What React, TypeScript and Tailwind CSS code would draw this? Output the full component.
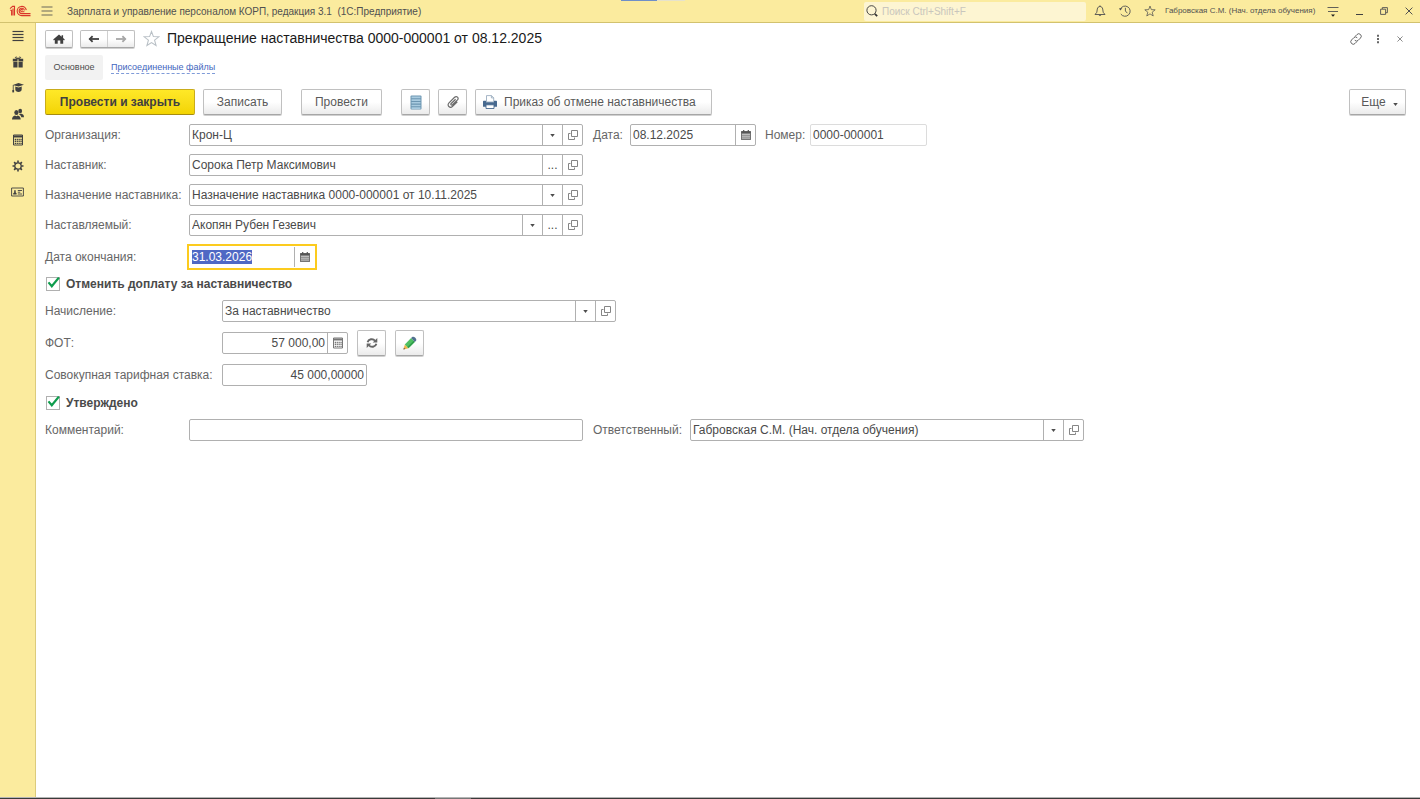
import clsx from "clsx";
import { useEffect, useRef, type ComponentProps, type ReactNode } from "react";

/* ---------- icons ---------- */

function LogoIcon() {
  return (
    <svg aria-hidden viewBox="0 0 22 12" className="h-3 w-[22px]" fill="none" stroke="#d9352a" strokeWidth="1.1">
      <path d="M1 3.6 3.6 1.4h1.9v9.200M1.200 5.200h1.400v5.400M4 3.600v7" />
      <path d="M21.500 10.600h-8.700a4.600 4.600 0 1 1 4.500-5.400" />
      <path d="M21.500 8.600h-8.600a2.700 2.700 0 1 1 2.600-3.300" />
      <path d="M13.800 5.300a1.100 1.100 0 1 0-1 1.400h2.600" />
    </svg>
  );
}

function LinesIcon({ rows, className }: { rows: number[]; className: string }) {
  return (
    <svg aria-hidden viewBox="0 0 12 12" className={className} stroke="currentColor" strokeWidth="1.2">
      {rows.map((y) => (
        <path key={y} d={`M.5 ${y}h11`} />
      ))}
    </svg>
  );
}

function GiftIcon() {
  return (
    <svg aria-hidden viewBox="0 0 12 12" className="h-3 w-3" fill="currentColor">
      <path d="M.8 2.800h4.700v2.600H.8zM6.500 2.800h4.700v2.600H6.500zM1.300 6h4.200v5.400H1.300zM6.500 6h4.200v5.400H6.500z" />
      <path d="M6 2.800C5 .8 3.600.7 3.400 1.500S4.500 2.800 6 2.800s2.800-.5 2.600-1.300S7 .8 6 2.800Z" fill="none" stroke="currentColor" />
    </svg>
  );
}

function GraduateIcon() {
  return (
    <svg aria-hidden viewBox="0 0 12 12" className="h-3 w-3" fill="currentColor">
      <path d="M6.500 1 12 2.800 6.500 4.600 1.600 3.200v5H.8V2.900z" />
      <path d="M3.300 4.400 6.500 5.400l3.200-1v2.800c0 1.700-1.400 2.700-3.200 2.700s-3.200-1-3.200-2.700z" />
      <path d="M.3 8h1.800v2.400H.3z" />
    </svg>
  );
}

function PeopleIcon() {
  return (
    <svg aria-hidden viewBox="0 0 12 12" className="h-3 w-3" fill="currentColor">
      <ellipse cx="8.200" cy="3" rx="1.900" ry="2.300" />
      <path d="M7.400 5.800h2.200C11 6.200 12 7 12 9.300H9.300C9 7.800 8.300 7 7.200 6.500z" />
      <ellipse cx="4.400" cy="4.500" rx="2.100" ry="2.600" />
      <path d="M0 11.500C0 9 1.300 7.900 3 7.400l1.400.9 1.400-.9c1.700.5 2.900 1.600 2.900 4.100z" />
    </svg>
  );
}

function CalculatorIcon({ className }: { className: string }) {
  return (
    <svg aria-hidden viewBox="0 0 12 12" className={className} fill="none" stroke="currentColor">
      <path d="M1.500 1h9v10h-9z" />
      <path d="M1.500 2.500h9" strokeWidth="2" />
      <path d="M2.700 5.500h7M2.700 7.400h7M2.700 9.300h7" strokeWidth="1.300" strokeDasharray="1.300 .6" />
    </svg>
  );
}

function GearIcon() {
  return (
    <svg aria-hidden viewBox="0 0 12 12" className="h-3 w-3" fill="none" stroke="currentColor">
      <circle cx="6" cy="6" r="3.200" strokeWidth="1.300" />
      <path
        d="M6 .5v2.200M6 9.300v2.200M.5 6h2.200M9.300 6h2.200M2.100 2.100l1.500 1.500M8.400 8.400l1.500 1.500M2.100 9.900l1.500-1.500M8.400 3.600l1.500-1.500"
        strokeWidth="1.600"
      />
    </svg>
  );
}

function CardIcon() {
  return (
    <svg aria-hidden viewBox="0 0 13 10" className="h-[10px] w-[13px]" fill="none" stroke="currentColor" strokeWidth=".9">
      <path d="M.6 1h11.800v8H.6z" />
      <path d="M2.200 7.400h3.400V6.200l-.9-.6V3.200H3.200v2.400l-1 .6z" fill="currentColor" stroke="none" />
      <path d="M6.800 3.500H11M6.800 5.200h2.500M6.800 7H11" />
    </svg>
  );
}

function BellIcon() {
  return (
    <svg aria-hidden viewBox="0 0 12 12" className="h-3 w-3" fill="none" stroke="currentColor" strokeWidth=".9">
      <path d="M1 9.500h10L9.200 7.300 8.700 4C8.400 2.400 7.400 1.500 6 1.500S3.600 2.400 3.300 4l-.5 3.300zM6 .4v1.100M5 9.700c.2 1.400 1.800 1.400 2 0" />
    </svg>
  );
}

function HistoryIcon() {
  return (
    <svg aria-hidden viewBox="0 0 12 12" className="h-3 w-3" fill="none" stroke="currentColor" strokeWidth=".9">
      <path d="M1.300 4.300A5.100 5.100 0 1 1 1.800 9M6.400 2.800V6l2 2.200" />
      <path d="M0 3.300h3.200L1.400 5.600z" fill="currentColor" stroke="none" />
    </svg>
  );
}

function StarIcon({ className }: { className: string }) {
  return (
    <svg aria-hidden viewBox="0 0 16 16" className={className} fill="none" stroke="currentColor" strokeLinejoin="miter">
      <path d="m8 1.400 1.800 4.800 5.100.2-4 3.200 1.400 5L8 11.800l-4.300 2.800 1.400-5-4-3.200 5.100-.2z" />
    </svg>
  );
}

function SearchIcon() {
  return (
    <svg aria-hidden viewBox="0 0 12 12" className="h-3 w-3 shrink-0" fill="none" stroke="#333">
      <circle cx="5.500" cy="5.300" r="4.600" strokeWidth=".9" />
      <path d="m8.800 8.800 2.400 2.400" strokeWidth="1.700" />
    </svg>
  );
}

function MenuDownIcon() {
  return (
    <svg aria-hidden viewBox="0 0 12 12" className="h-3 w-3" stroke="currentColor">
      <path d="M.5 2.500h11M1 6.500h10" strokeWidth=".9" />
      <path d="M4 9.500h4l-2 2.200z" fill="#222" stroke="none" />
    </svg>
  );
}

function RestoreIcon() {
  return (
    <svg aria-hidden viewBox="0 0 8 8" className="h-2 w-2" fill="none" stroke="currentColor" strokeWidth=".9">
      <path d="M.6 2.200h5v5.200h-5zM2.300 2V.6h5.100v5.100H5.800" />
    </svg>
  );
}

function CrossIcon({ className }: { className: string }) {
  return (
    <svg aria-hidden viewBox="0 0 8 8" className={className} stroke="currentColor">
      <path d="m.6.6 6.800 6.800M7.400.6.6 7.400" />
    </svg>
  );
}

function LinkIcon() {
  return (
    <svg aria-hidden viewBox="0 0 24 24" className="h-3 w-3" fill="none" stroke="currentColor" strokeWidth="2">
      <path d="m10 7 4-4a4.900 4.900 0 0 1 7 7l-4.500 4.500a4.900 4.900 0 0 1-7 0" />
      <path d="m14 17-4 4a4.900 4.900 0 0 1-7-7l4.500-4.500a4.900 4.900 0 0 1 7 0" />
    </svg>
  );
}

function DotsIcon() {
  return (
    <svg aria-hidden viewBox="0 0 4 10" className="h-[10px] w-1" fill="currentColor">
      <path d="M1 .8h2v2H1zM1 4h2v2H1zM1 7.200h2v2H1z" />
    </svg>
  );
}

function HomeIcon() {
  return (
    <svg aria-hidden viewBox="0 0 12 10" className="h-[10px] w-3" fill="#404040">
      <path d="M6 .4 8.600 2.700V1.200h1.500V4l1.700 1.500-.7.900-.9-.7v4H7.300V6.500H4.700v3.200H1.800v-4l-.9.700-.7-.9z" />
    </svg>
  );
}

function ArrowIcon({ flip, color }: { flip?: boolean; color: string }) {
  return (
    <svg aria-hidden viewBox="0 0 12 8" className={clsx("h-2 w-3", flip && "rotate-180")} fill="none" stroke={color}>
      <path d="M1.500 4h9.500" strokeWidth="1.800" />
      <path d="M4.600 1.200 1.800 4l2.800 2.800" strokeWidth="1.800" />
    </svg>
  );
}

function ListIcon() {
  return (
    <svg aria-hidden viewBox="0 0 12 15" className="h-[15px] w-3">
      <rect x=".5" y=".5" width="11" height="14" rx="1" fill="#6c96b2" />
      <path d="M1.500 2.400h9M1.500 5.100h9M1.500 7.800h9M1.500 10.500h9M1.500 13.100h9" stroke="#a9cbe0" strokeWidth="1.600" />
    </svg>
  );
}

function ClipIcon() {
  return (
    <svg aria-hidden viewBox="0 0 14 14" className="h-[14px] w-[14px]" fill="none" stroke="#6b6b6b" strokeWidth="1.200">
      <path d="M9.600 4.200 5.200 8.500c-.9 1 .3 2.200 1.300 1.300l5-4.900c1.900-2-.9-4.500-2.900-2.600L3 7.800c-2.600 2.700 1 6.100 3.600 3.500l4.700-4.600" />
    </svg>
  );
}

function PrinterIcon() {
  return (
    <svg aria-hidden viewBox="0 0 14 14" className="h-[14px] w-[14px]">
      <path d="M3.500.6h5l2.200 2.200V7H3.500z" fill="#fff" stroke="#8fa3b8" strokeWidth=".8" />
      <path d="M8.400.6v2.300h2.300" fill="none" stroke="#8fa3b8" strokeWidth=".8" />
      <path d="M1 5.800h2v1.500h8V5.800h2c.6 0 1 .4 1 1v4.900H0V6.800c0-.6.4-1 1-1z" fill="#47698f" />
      <path d="M3 9.800h8v3.700H3z" fill="#fff" stroke="#47698f" strokeWidth=".9" />
    </svg>
  );
}

function CalendarIcon() {
  return (
    <svg aria-hidden viewBox="0 0 10 10" className="h-[10px] w-[10px]" fill="none" stroke="#555">
      <path d="M.4 1.500h9.200v8.200H.4z" fill="#8a8a8a" strokeWidth=".8" />
      <path d="M.4 2.300h9.200" strokeWidth="1.600" />
      <path d="M2.700 0v2M7.300 0v2" strokeWidth="1.200" />
      <path d="M1.400 4.500h7.400M1.400 6.300h7.400M1.400 8.100h7.400" stroke="#e9e9e9" strokeWidth=".9" strokeDasharray="1.200 .8" />
    </svg>
  );
}

function OpenIcon() {
  return (
    <svg aria-hidden viewBox="0 0 10 10" className="h-[10px] w-[10px]" fill="none" stroke="#858585">
      <path d="M3.500.5h6v6h-6z" />
      <path d="M2.500 3.500h-2v6h6v-2" />
    </svg>
  );
}

function CaretIcon({ className = "h-[3px] w-[5px]" }: { className?: string }) {
  return (
    <svg aria-hidden viewBox="0 0 6 4" className={className} fill="#4d4d4d">
      <path d="M0 0h6L3 4z" />
    </svg>
  );
}

function RefreshIcon() {
  return (
    <svg aria-hidden viewBox="0 0 12 12" className="h-3 w-3" fill="none" stroke="#666" strokeWidth="1.900">
      <path d="M1.600 5.200C2.400 2 7 1.100 9 3.800M10.400 6.800C9.600 10 5 10.900 3 8.200" />
      <path d="M11.300 1v4.600H6.700zM.7 11V6.400h4.600z" fill="#666" stroke="none" />
    </svg>
  );
}

function PencilIcon() {
  return (
    <svg aria-hidden viewBox="0 0 14 14" className="h-[14px] w-[14px]">
      <path d="m.4 13.600 1.400-5.200 3.800 3.800z" fill="#f0b64c" />
      <path d="m.4 13.600.5-1.900 1.400 1.400z" fill="#555" />
      <path d="m1.800 8.400 6.300-6.300 3.800 3.800-6.300 6.300z" fill="#4fbf62" />
      <path d="m4.900 11.500 6.300-6.300" stroke="#2f9d4a" strokeWidth="1.600" />
      <path d="m8.100 2.100 1.100-1.100c1.700-1.500 5.200 2 3.800 3.800l-1.100 1.100z" fill="#51708f" />
    </svg>
  );
}

/* ---------- controls ---------- */

const BUTTON =
  "flex items-center justify-center rounded-[2px] border border-[#c0c0c0] border-b-[#a6a6a6] bg-linear-to-b from-white from-50% to-[#ebebeb] shadow-[0_1px_0_#d0d0d0]";

function ToolButton({ className, children, ...rest }: ComponentProps<"button">) {
  return (
    <button type="button" className={clsx(BUTTON, "h-[26px] shrink-0 text-[#595959]", className)} {...rest}>
      {children}
    </button>
  );
}

type Action = "list" | "pick" | "open" | "calendar" | "calc";

const ACTIONS: Record<Action, { label: string; icon: ReactNode }> = {
  list: { label: "Выбрать из списка", icon: <CaretIcon /> },
  pick: { label: "Выбрать", icon: "..." },
  open: { label: "Открыть", icon: <OpenIcon /> },
  calendar: { label: "Календарь", icon: <CalendarIcon /> },
  calc: { label: "Калькулятор", icon: <CalculatorIcon className="h-3 w-3 text-[#777]" /> },
};

interface FieldProps {
  id: string;
  value: string;
  actions?: Action[];
  width: string;
  numeric?: boolean;
  readOnly?: boolean;
}

function Field({ id, value, actions = [], width, numeric, readOnly }: FieldProps) {
  return (
    <div
      className={clsx(
        "flex h-[22px] rounded-[2px] border bg-white",
        readOnly ? "border-[#dcdcdc]" : "border-[#b0b0b0]",
        width,
      )}
    >
      <input
        id={id}
        defaultValue={value}
        readOnly={readOnly}
        className={clsx("min-w-0 flex-1 px-0.5 outline-none", numeric && "text-right")}
      />
      {actions.map((action) => (
        <button
          key={action}
          type="button"
          aria-label={ACTIONS[action].label}
          className="flex w-5 shrink-0 items-center justify-center border-l border-[#b0b0b0]"
        >
          {ACTIONS[action].icon}
        </button>
      ))}
    </div>
  );
}

function Row({ id, label, wide, children }: { id: string; label: string; wide?: boolean; children: ReactNode }) {
  return (
    <div className="flex items-center">
      <label htmlFor={id} className={clsx("shrink-0 whitespace-nowrap text-[#666]", wide ? "w-[177px]" : "w-36")}>
        {label}
      </label>
      {children}
    </div>
  );
}

function ActiveDateField({ id, value }: { id: string; value: string }) {
  const ref = useRef<HTMLInputElement>(null);

  useEffect(() => {
    ref.current?.focus();
    ref.current?.select();
  }, []);

  return (
    <div className="-ml-0.5 flex h-[26px] w-[130px] items-center border-2 border-[#fccb1e] bg-white">
      <input
        id={id}
        ref={ref}
        defaultValue={value}
        className="min-w-0 flex-1 px-[3px] leading-[14px] outline-none selection:bg-[#4f68c4] selection:text-white"
      />
      <button
        type="button"
        aria-label="Календарь"
        className="flex h-5 w-[21px] shrink-0 items-center justify-center border-l border-[#b0b0b0]"
      >
        <CalendarIcon />
      </button>
    </div>
  );
}

function CheckRow({ label }: { label: string }) {
  return (
    <label className="flex h-[17px] items-center gap-1.5 font-bold text-[#4a4a4a]">
      <span className="relative ml-px flex h-[14px] w-[14px]">
        <input type="checkbox" defaultChecked className="h-[14px] w-[14px] appearance-none border border-[#b0b0b0] bg-white" />
        <svg aria-hidden viewBox="0 0 14 14" className="pointer-events-none absolute inset-0" fill="none" stroke="#0f9d4e" strokeWidth="2.200">
          <path d="m2.500 5.400 3.300 3.900L12.900.6" />
        </svg>
      </span>
      {label}
    </label>
  );
}

/* ---------- page ---------- */

const SECTIONS = [
  { name: "Главное", icon: <LinesIcon rows={[1.5, 4.5, 7.5, 10.5]} className="h-3 w-3" /> },
  { name: "Льготы", icon: <GiftIcon /> },
  { name: "Обучение", icon: <GraduateIcon /> },
  { name: "Кадры", icon: <PeopleIcon /> },
  { name: "Зарплата", icon: <CalculatorIcon className="h-3 w-3" /> },
  { name: "Настройка", icon: <GearIcon /> },
  { name: "Администрирование", icon: <CardIcon /> },
];

function TitleBar() {
  return (
    <header className="relative flex h-[23px] shrink-0 items-center border-b border-[#d2c26f] bg-[#fbeb9e] text-[#505050]">
      <div className="absolute top-0 left-[621px] flex h-px">
        <span className="w-9 bg-[#6f8fc8]" />
        <span className="w-7 bg-[#e6e2cc]" />
      </div>
      <a href="#" aria-label="1С" className="ml-[9px]">
        <LogoIcon />
      </a>
      <button type="button" aria-label="Меню" className="ml-2.5">
        <LinesIcon rows={[2, 6, 10]} className="h-3 w-3 opacity-70" />
      </button>
      <span className="ml-3.5 whitespace-pre text-[10px]">
        Зарплата и управление персоналом КОРП, редакция 3.1{"  "}(1С:Предприятие)
      </span>
      <div className="ml-auto flex h-[19px] w-[222px] items-center gap-1 rounded-[2px] bg-[#fdf5d2] px-0.5">
        <SearchIcon />
        <input
          aria-label="Поиск"
          placeholder="Поиск Ctrl+Shift+F"
          className="min-w-0 flex-1 text-[10px] outline-none placeholder:text-[#c9c6bd]"
        />
      </div>
      <div className="ml-2 flex items-center gap-[13px]">
        <button type="button" aria-label="Уведомления">
          <BellIcon />
        </button>
        <button type="button" aria-label="История">
          <HistoryIcon />
        </button>
        <button type="button" aria-label="Избранное">
          <StarIcon className="h-3 w-3" />
        </button>
      </div>
      <a href="#" className="ml-[9px] w-[153px] text-[8px] whitespace-nowrap">
        Габровская С.М. (Нач. отдела обучения)
      </a>
      <button type="button" aria-label="Сервис и настройки" className="ml-[9px]">
        <MenuDownIcon />
      </button>
      <div className="mr-[7px] ml-[17px] flex items-center gap-[17px]">
        <button type="button" aria-label="Свернуть" className="flex h-2 w-[7px] items-end">
          <span className="h-px w-full bg-[#404040]" />
        </button>
        <button type="button" aria-label="Развернуть">
          <RestoreIcon />
        </button>
        <button type="button" aria-label="Закрыть приложение">
          <CrossIcon className="h-2 w-2" />
        </button>
      </div>
    </header>
  );
}

function Sidebar() {
  return (
    <nav className="flex w-9 shrink-0 flex-col items-center gap-3.5 border-r border-[#dccb7c] bg-[#fbeb9e] pt-[7px] text-[#404040]">
      {SECTIONS.map((section) => (
        <button key={section.name} type="button" aria-label={section.name} className="flex h-3 items-center">
          {section.icon}
        </button>
      ))}
    </nav>
  );
}

function FormHeader() {
  return (
    <div className="flex h-[19px] items-center">
      <button type="button" aria-label="Начальная страница" className={clsx(BUTTON, "h-[18px] w-7")}>
        <HomeIcon />
      </button>
      <div className={clsx(BUTTON, "ml-[7px] h-[18px] w-[55px]")}>
        <button type="button" aria-label="Назад" className="flex h-full flex-1 items-center justify-center border-r border-[#d0d0d0]">
          <ArrowIcon color="#404040" />
        </button>
        <button type="button" aria-label="Вперед" className="flex h-full flex-1 items-center justify-center">
          <ArrowIcon flip color="#a6a6a6" />
        </button>
      </div>
      <button type="button" aria-label="В избранное" className="ml-2 text-[#b9c0c6]">
        <StarIcon className="h-[17px] w-[17px]" />
      </button>
      <h1 className="ml-[7px] text-[14px] text-[#1a1a1a]">Прекращение наставничества 0000-000001 от 08.12.2025</h1>
      <div className="-mr-[5px] ml-auto flex items-center text-[#666]">
        <button type="button" aria-label="Получить ссылку" className="flex w-[22px] justify-center">
          <LinkIcon />
        </button>
        <button type="button" aria-label="Еще действия" className="flex w-[22px] justify-center">
          <DotsIcon />
        </button>
        <button type="button" aria-label="Закрыть" className="flex w-[22px] justify-center">
          <CrossIcon className="h-1.5 w-1.5" />
        </button>
      </div>
    </div>
  );
}

function CommandBar() {
  return (
    <div className="mt-[9px] flex items-center text-[12px]">
      <button
        type="button"
        className="flex h-[26px] w-[150px] shrink-0 items-center justify-center rounded-[2px] border border-[#c9ac1a] border-b-[#a68c10] bg-linear-to-b from-[#ffe827] to-[#f3d400] font-bold text-[#404040]"
      >
        Провести и закрыть
      </button>
      <ToolButton className="ml-2 w-[79px]">Записать</ToolButton>
      <ToolButton className="ml-[19px] w-[81px]">Провести</ToolButton>
      <ToolButton className="ml-[19px] w-[29px]" aria-label="Движения документа">
        <ListIcon />
      </ToolButton>
      <ToolButton className="ml-2 w-[29px]" aria-label="Присоединенные файлы">
        <ClipIcon />
      </ToolButton>
      <button type="button" className={clsx(BUTTON, "ml-2 h-[26px] shrink-0 gap-[7px] pr-[15px] pl-[7px] text-[#595959]")}>
        <PrinterIcon />
        Приказ об отмене наставничества
      </button>
      <ToolButton className="ml-auto w-[57px] gap-[7px] pl-1">
        Еще
        <CaretIcon className="mt-1 h-[3px] w-[5px]" />
      </ToolButton>
    </div>
  );
}

function DocumentForm() {
  return (
    <form className="mt-[9px] flex flex-col gap-2">
      <Row id="org" label="Организация:">
        <Field id="org" value="Крон-Ц" actions={["list", "open"]} width="w-[394px]" />
        <label htmlFor="date" className="ml-2.5 w-[37px] text-[#666]">
          Дата:
        </label>
        <Field id="date" value="08.12.2025" actions={["calendar"]} width="w-[126px]" />
        <label htmlFor="number" className="ml-[9px] w-[45px] text-[#666]">
          Номер:
        </label>
        <Field id="number" value="0000-000001" width="w-[117px]" readOnly />
      </Row>
      <Row id="mentor" label="Наставник:">
        <Field id="mentor" value="Сорока Петр Максимович" actions={["pick", "open"]} width="w-[394px]" />
      </Row>
      <Row id="assignment" label="Назначение наставника:">
        <Field
          id="assignment"
          value="Назначение наставника 0000-000001 от 10.11.2025"
          actions={["list", "open"]}
          width="w-[394px]"
        />
      </Row>
      <Row id="mentee" label="Наставляемый:">
        <Field id="mentee" value="Акопян Рубен Гезевич" actions={["list", "pick", "open"]} width="w-[394px]" />
      </Row>
      <Row id="end" label="Дата окончания:">
        <ActiveDateField id="end" value="31.03.2026" />
      </Row>

      <div className="-mt-[3px]">
        <CheckRow label="Отменить доплату за наставничество" />
      </div>
      <Row id="accrual" label="Начисление:" wide>
        <Field id="accrual" value="За наставничество" actions={["list", "open"]} width="w-[394px]" />
      </Row>
      <Row id="payroll" label="ФОТ:" wide>
        <Field id="payroll" value="57 000,00" actions={["calc"]} width="w-[126px]" numeric />
        <ToolButton className="ml-[9px] w-[29px]" aria-label="Обновить">
          <RefreshIcon />
        </ToolButton>
        <ToolButton className="ml-[9px] w-[29px]" aria-label="Изменить">
          <PencilIcon />
        </ToolButton>
      </Row>
      <Row id="rate" label="Совокупная тарифная ставка:" wide>
        <Field id="rate" value="45 000,00000" width="w-[145px]" numeric />
      </Row>

      <CheckRow label="Утверждено" />
      <Row id="comment" label="Комментарий:">
        <Field id="comment" value="" width="w-[394px]" />
        <label htmlFor="responsible" className="ml-2.5 w-[97px] text-[#666]">
          Ответственный:
        </label>
        <Field
          id="responsible"
          value="Габровская С.М. (Нач. отдела обучения)"
          actions={["list", "open"]}
          width="w-[394px]"
        />
      </Row>
    </form>
  );
}

export default function App() {
  return (
    <div className="flex h-screen flex-col bg-white font-['Liberation_Sans',Arial,sans-serif] text-[12px] text-[#4a4a4a]">
      <TitleBar />
      <div className="flex min-h-0 flex-1">
        <Sidebar />
        <main className="min-w-0 flex-1 overflow-auto pt-[6px] pr-3.5 pl-[9px]">
          <FormHeader />
          <div className="mt-[7px] flex items-center text-[9px]">
            <button type="button" className="h-[25px] w-[58px] rounded-[2px] bg-[#f2f2f2] text-[#4d4d4d]">
              Основное
            </button>
            <a href="#" className="ml-2 border-b border-dashed border-[#7f9bd8] leading-[11px] text-[#3f66be]">
              Присоединенные файлы
            </a>
          </div>
          <CommandBar />
          <DocumentForm />
        </main>
      </div>
      <div className="flex h-0.5 shrink-0 border-t border-[#b5b5b5] bg-[#3a3a3a]">
        <div className="ml-[435px] w-9 bg-[#777]" />
      </div>
    </div>
  );
}
